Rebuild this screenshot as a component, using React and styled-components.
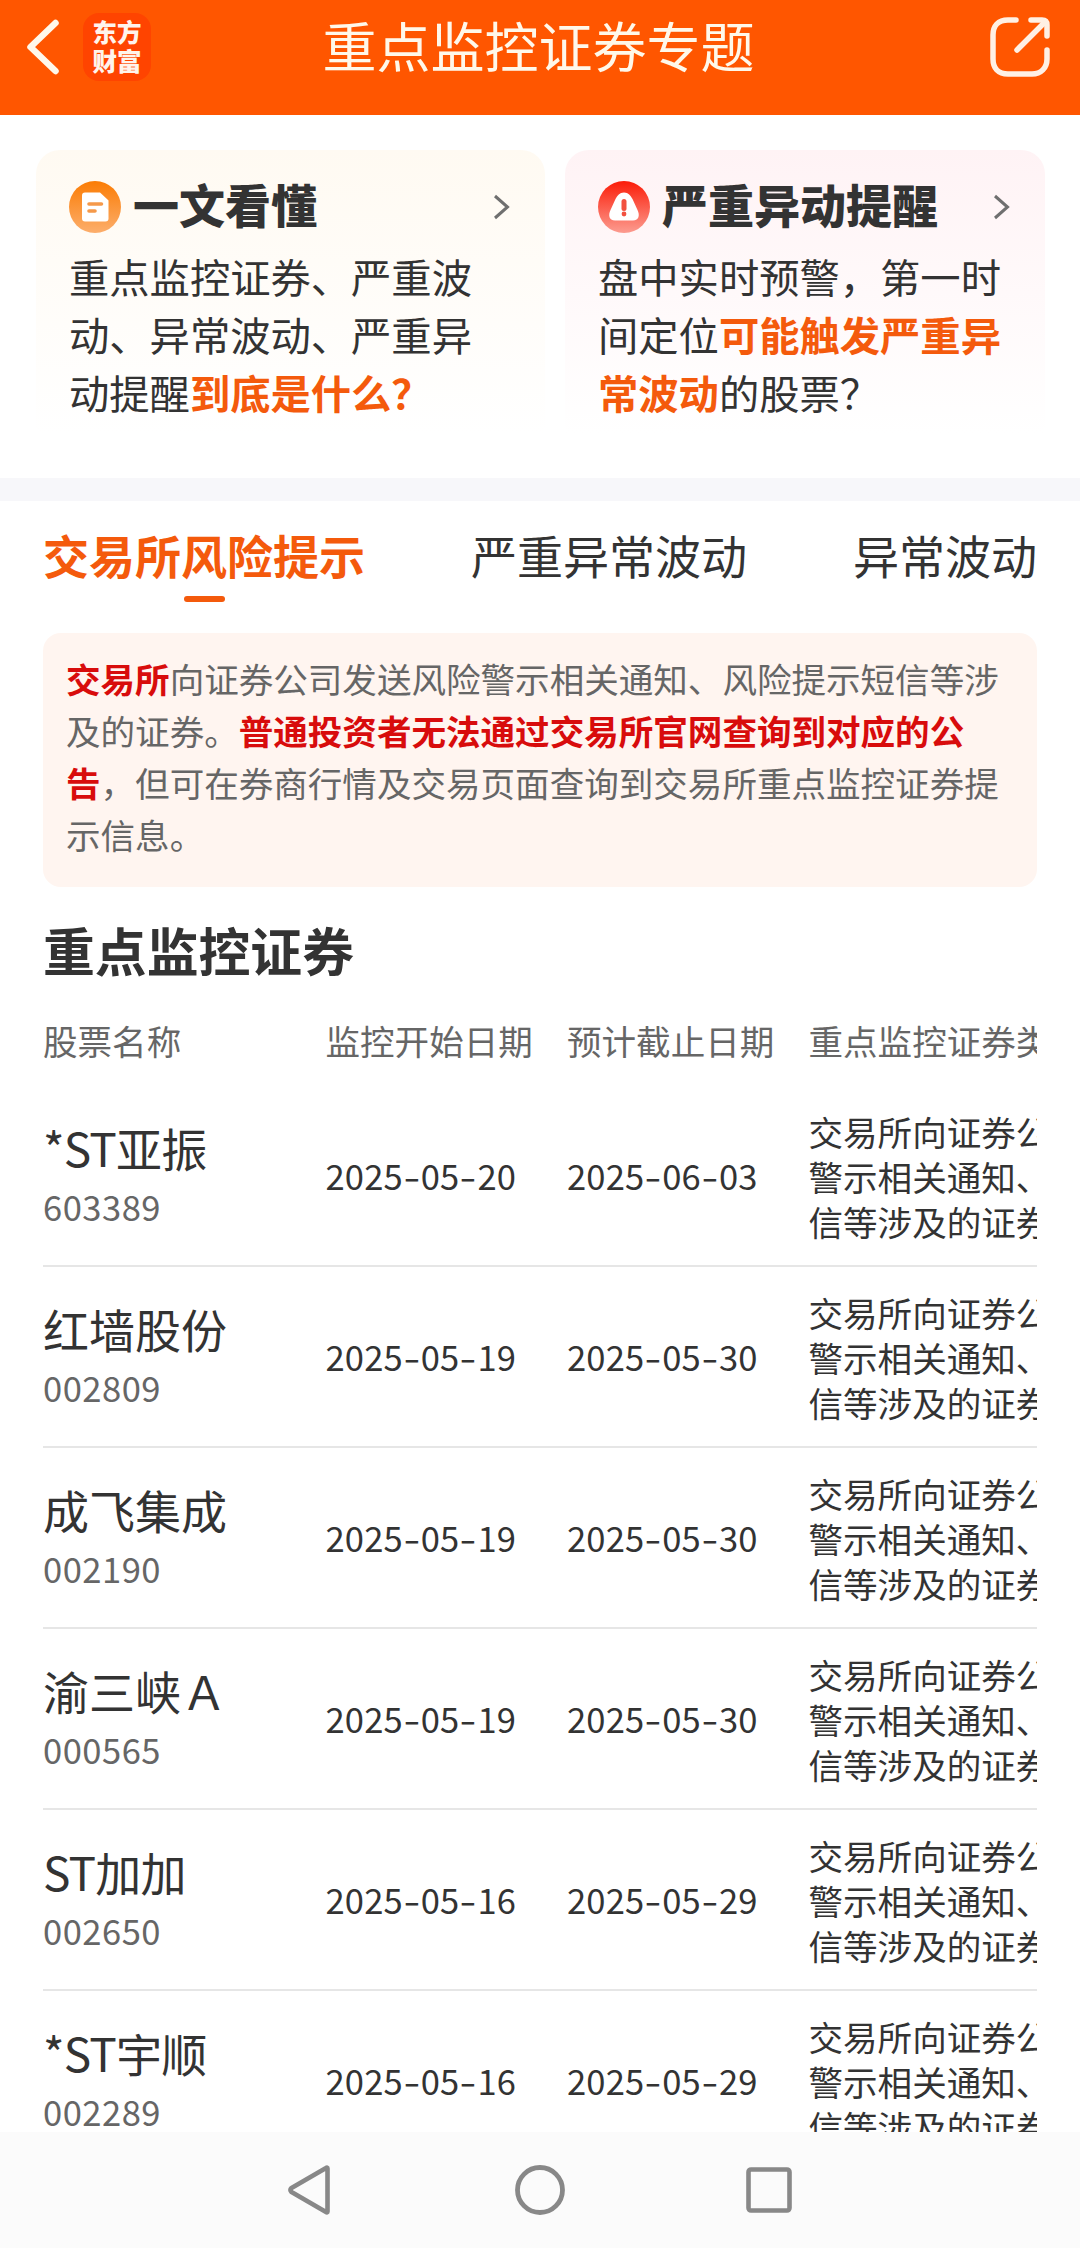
import styled, { createGlobalStyle, css } from 'styled-components';

const GlobalStyle = createGlobalStyle`
  * {
    box-sizing: border-box;
  }
  body {
    margin: 0;
    background-color: #ffffff;
    color: #333333;
    font-family: 'Noto Sans CJK SC', 'Noto Sans', sans-serif;
  }
`;

const Page = styled.div`
  display: flex;
  flex-direction: column;
  width: 1080px;
  height: 2248px;
  overflow: hidden;
`;

const HeaderWrapper = styled.header`
  display: flex;
  height: 115px;
  padding: 0 30px 21px 27px;
  align-items: center;
  flex-shrink: 0;
  background-color: #ff5600;
`;

const HeaderSide = styled.div`
  display: flex;
  flex: 1;
  align-items: center;
  justify-content: ${({ $end }) => ($end ? 'flex-end' : 'flex-start')};
  gap: 24px;
`;

const Logo = styled.div`
  width: 68px;
  height: 68px;
  padding-top: 4px;
  border-radius: 16px;
  background-color: #ff4400;
  color: #fff4ec;
  font-size: 24.5px;
  font-weight: 900;
  line-height: 29px;
  text-align: center;
`;

const HeaderTitle = styled.h1`
  margin: 0;
  padding-bottom: 4px;
  color: #fff8ea;
  font-size: 54px;
  font-weight: 400;
  line-height: 80px;
`;

const CardList = styled.section`
  display: flex;
  height: 363px;
  padding: 35px 35px 0 36px;
  gap: 20px;
  flex-shrink: 0;
`;

const Card = styled.article`
  width: ${({ $width }) => $width}px;
  height: 300px;
  padding: 30px 35px 0 33px;
  border-radius: 24px;
  background: ${({ $tone }) => `linear-gradient(180deg, ${$tone} 0%, #ffffff 95%)`};
`;

const CardHead = styled.div`
  display: flex;
  height: 54px;
  align-items: center;
`;

const CardTitle = styled.h2`
  flex: 1;
  margin: 0 0 0 12px;
  padding-bottom: 9px;
  font-size: 46px;
  font-weight: 900;
  line-height: 54px;
`;

const CardText = styled.p`
  margin: 13px 0 0;
  font-size: 40.3px;
  line-height: 58px;
  white-space: nowrap;
`;

const Accent = styled.strong`
  color: #f45a0c;
  font-weight: 700;
`;

const Divider = styled.div`
  height: 23px;
  flex-shrink: 0;
  background-color: #f7f7fa;
`;

const Content = styled.main`
  flex: 1;
  min-height: 0;
  padding: 0 43px;
  overflow: hidden;
`;

const Tabs = styled.nav`
  display: flex;
  height: 132px;
  padding-top: 19px;
  justify-content: space-between;
`;

const Tab = styled.div`
  display: flex;
  flex-direction: column;
  align-items: center;
  font-size: 46px;
  line-height: 68px;
  ${({ $active }) =>
    $active &&
    css`
      color: #f45a0c;
      font-weight: 700;
      &::after {
        content: '';
        width: 41px;
        height: 6px;
        margin-top: 8px;
        border-radius: 3px;
        background-color: #f45a0c;
      }
    `}
`;

const Notice = styled.p`
  height: 254px;
  margin: 0;
  padding: 19px 23px;
  border-radius: 18px;
  background-color: #fff5f0;
  color: #666666;
  font-size: 34.56px;
  line-height: 52px;
  white-space: nowrap;
`;

const Warn = styled.strong`
  color: #d80c0c;
  font-weight: 700;
`;

const SectionTitle = styled.h2`
  margin: 27px 0 0;
  font-size: 51.84px;
  font-weight: 700;
  line-height: 72px;
`;

const Table = styled.div`
  overflow: hidden;
`;

const rowGrid = css`
  display: grid;
  grid-template-columns: 282.5px 241.5px 241.5px 420px;
  align-items: center;
`;

const TableHead = styled.div`
  ${rowGrid}
  height: 100px;
  padding-top: 8px;
  color: #666666;
  font-size: 34.56px;
  white-space: nowrap;
`;

const Row = styled.div`
  ${rowGrid}
  width: 1186px;
  height: 181px;
  border-bottom: 2px solid #e6e6e6;
`;

const StockName = styled.div`
  margin-top: 1px;
  font-size: 46px;
  letter-spacing: ${({ $prefixed }) => ($prefixed ? '-0.8px' : '0')};
  line-height: 60px;
`;

const StockCode = styled.div`
  color: #666666;
  font-size: 34.56px;
  letter-spacing: 0.5px;
  line-height: 58px;
`;

const DateCell = styled.div`
  padding-bottom: 2px;
  font-size: 34.56px;
  letter-spacing: 0.15px;
`;

const Dash = styled.span`
  display: inline-block;
  width: 18px;
  text-align: center;
  transform: scaleX(1.4);
`;

const Desc = styled.div`
  padding-top: 2px;
  font-size: 34.56px;
  line-height: 45px;
`;

const NavBar = styled.footer`
  display: flex;
  height: 116px;
  justify-content: center;
  align-items: center;
  gap: 180px;
  flex-shrink: 0;
  background-color: #fbfbfb;
`;

const BackIcon = () => (
  <svg width="32" height="56" viewBox="0 0 32 56" fill="none">
    <path d="M28.5 4L3.500 28L28.500 52" stroke="#fff8ea" strokeWidth="6.500" strokeLinecap="round" strokeLinejoin="round" />
  </svg>
);

const ShareIcon = () => (
  <svg width="60" height="60" viewBox="0 0 60 60" fill="none" stroke="#fff0e4" strokeWidth="5.500" strokeLinecap="round" strokeLinejoin="round">
    <path d="M26 3H18C8 3 3 9 3 18V42C3 51 8 57 18 57H42C51 57 57 51 57 42V33" />
    <path d="M41 3H52Q57 3 57 8V19" />
    <path d="M54.500 5.500L27 33" />
  </svg>
);

const ArrowIcon = () => (
  <svg width="17" height="26" viewBox="0 0 17 26" fill="none">
    <path d="M2 2L14.500 13L2 24" stroke="#6f6f6f" strokeWidth="3" />
  </svg>
);

const DocIcon = () => (
  <svg width="52" height="52" viewBox="0 0 52 52">
    <defs>
      <linearGradient id="doc" x1="0" y1="0" x2="0" y2="1">
        <stop offset="0" stopColor="#fb7c04" />
        <stop offset="1" stopColor="#fcae6c" />
      </linearGradient>
    </defs>
    <circle cx="26" cy="26" r="26" fill="url(#doc)" />
    <path d="M16 11.500H31L39.500 19.500V37.500Q39.500 40.500 36.500 40.500H16Q13 40.500 13 37.500V14.500Q13 11.500 16 11.500Z" fill="#ffffff" />
    <path d="M20 23H32.500M20 30H26" stroke="#f5994a" strokeWidth="3.600" strokeLinecap="round" />
  </svg>
);

const AlertIcon = () => (
  <svg width="52" height="52" viewBox="0 0 52 52">
    <defs>
      <linearGradient id="alert" x1="0" y1="0" x2="0" y2="1">
        <stop offset="0" stopColor="#fb1c08" />
        <stop offset="1" stopColor="#fc9c90" />
      </linearGradient>
    </defs>
    <circle cx="26" cy="26" r="26" fill="url(#alert)" />
    <path d="M26 11.500C30.500 11.500 32.500 14.500 34.500 18L39.500 29C42 34 41 39.500 35 39.500H17C11 39.500 10 34 12.500 29L17.500 18C19.500 14.500 21.500 11.500 26 11.500Z" fill="#ffffff" />
    <path d="M26 20.500V27.500" stroke="#f2503f" strokeWidth="5" strokeLinecap="round" />
    <circle cx="26" cy="33" r="2.400" fill="#f2503f" />
  </svg>
);

const stocks = [
  { name: '*ST亚振', code: '603389', start: '2025-05-20', end: '2025-06-03' },
  { name: '红墙股份', code: '002809', start: '2025-05-19', end: '2025-05-30' },
  { name: '成飞集成', code: '002190', start: '2025-05-19', end: '2025-05-30' },
  { name: '渝三峡Ａ', code: '000565', start: '2025-05-19', end: '2025-05-30' },
  { name: 'ST加加', code: '002650', start: '2025-05-16', end: '2025-05-29' },
  { name: '*ST宇顺', code: '002289', start: '2025-05-16', end: '2025-05-29' },
];

const DateText = ({ value }) => {
  const [year, month, day] = value.split('-');
  return (
    <DateCell>
      {year}
      <Dash>-</Dash>
      {month}
      <Dash>-</Dash>
      {day}
    </DateCell>
  );
};

const Header = () => (
  <HeaderWrapper>
    <HeaderSide>
      <BackIcon />
      <Logo>
        东方
        <br />
        财富
      </Logo>
    </HeaderSide>
    <HeaderTitle>重点监控证券专题</HeaderTitle>
    <HeaderSide $end>
      <ShareIcon />
    </HeaderSide>
  </HeaderWrapper>
);

const StockRow = ({ stock }) => (
  <Row>
    <div>
      <StockName $prefixed={stock.name.includes('ST')}>{stock.name}</StockName>
      <StockCode>{stock.code}</StockCode>
    </div>
    <DateText value={stock.start} />
    <DateText value={stock.end} />
    <Desc>交易所向证券公司发送风险警示相关通知、风险提示短信等涉及的证券</Desc>
  </Row>
);

export default function App() {
  return (
    <Page>
      <GlobalStyle />
      <Header />
      <CardList>
        <Card $width={509} $tone="#fffaf2">
          <CardHead>
            <DocIcon />
            <CardTitle>一文看懂</CardTitle>
            <ArrowIcon />
          </CardHead>
          <CardText>
            重点监控证券、严重波
            <br />
            动、异常波动、严重异
            <br />
            动提醒<Accent>到底是什么？</Accent>
          </CardText>
        </Card>
        <Card $width={480} $tone="#fff3f5">
          <CardHead>
            <AlertIcon />
            <CardTitle>严重异动提醒</CardTitle>
            <ArrowIcon />
          </CardHead>
          <CardText>
            盘中实时预警，第一时
            <br />
            间定位<Accent>可能触发严重异</Accent>
            <br />
            <Accent>常波动</Accent>的股票？
          </CardText>
        </Card>
      </CardList>
      <Divider />
      <Content>
        <Tabs>
          <Tab $active>交易所风险提示</Tab>
          <Tab>严重异常波动</Tab>
          <Tab>异常波动</Tab>
        </Tabs>
        <Notice>
          <Warn>交易所</Warn>向证券公司发送风险警示相关通知、风险提示短信等涉
          <br />
          及的证券。<Warn>普通投资者无法通过交易所官网查询到对应的公</Warn>
          <br />
          <Warn>告</Warn>，但可在券商行情及交易页面查询到交易所重点监控证券提
          <br />
          示信息。
        </Notice>
        <SectionTitle>重点监控证券</SectionTitle>
        <Table>
          <TableHead>
            <span>股票名称</span>
            <span>监控开始日期</span>
            <span>预计截止日期</span>
            <span>重点监控证券类型</span>
          </TableHead>
          {stocks.map((stock) => (
            <StockRow key={stock.code} stock={stock} />
          ))}
        </Table>
      </Content>
      <NavBar>
        <svg width="46" height="52" viewBox="0 0 46 52" fill="none">
          <path d="M39.500 4.500V47.500Q39.500 49 38 48L3.500 28Q1.500 26 3.500 24L38 4Q39.500 3 39.500 4.500Z" stroke="#888888" strokeWidth="4.600" strokeLinejoin="round" />
        </svg>
        <svg width="52" height="52" viewBox="0 0 52 52" fill="none">
          <circle cx="26" cy="26" r="22.500" stroke="#888888" strokeWidth="4.800" />
        </svg>
        <svg width="46" height="46" viewBox="0 0 46 46" fill="none">
          <rect x="2.500" y="2.500" width="41" height="41" rx="2.500" stroke="#888888" strokeWidth="4.600" />
        </svg>
      </NavBar>
    </Page>
  );
}
